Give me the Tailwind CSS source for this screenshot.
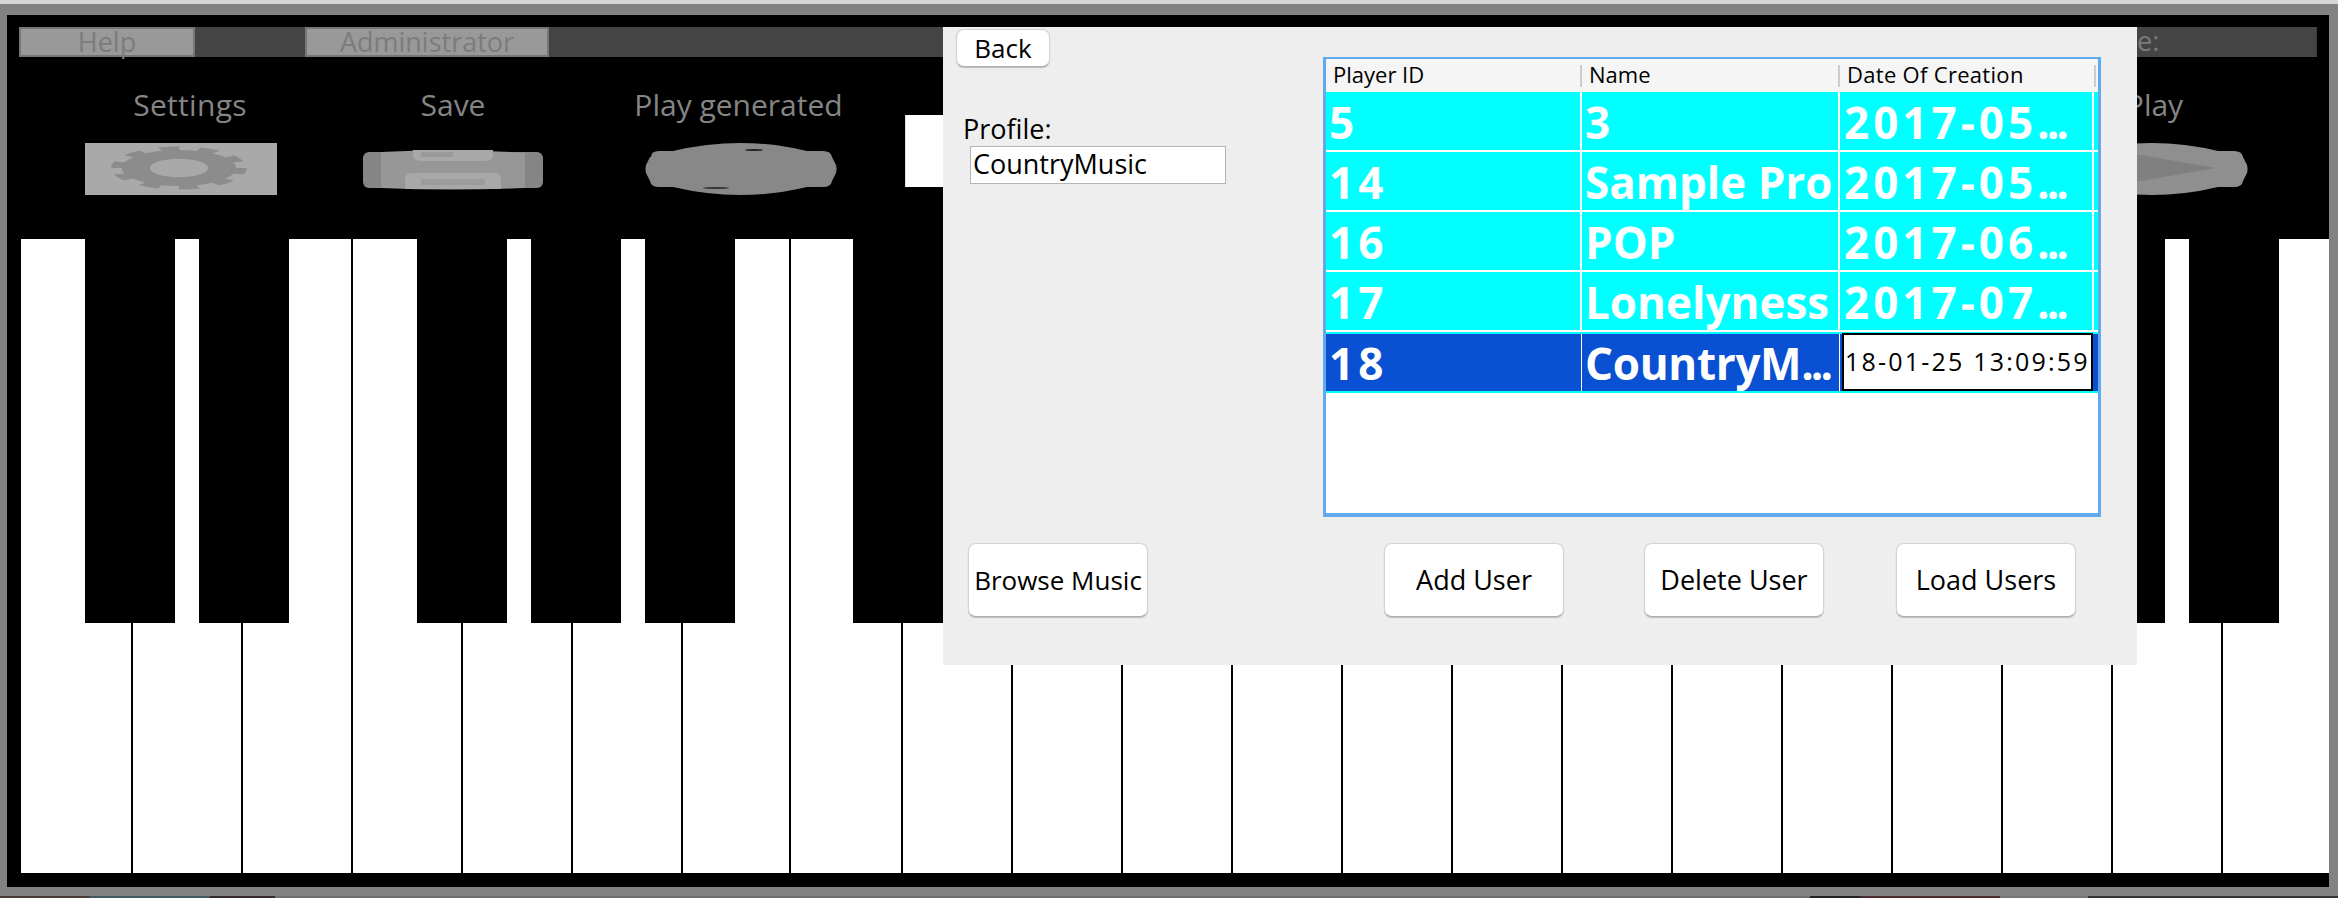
<!DOCTYPE html>
<html lang="en">
<head>
    <meta charset="UTF-8">
    <title>Piano</title>
    <script src="https://cdn.jsdelivr.net/npm/@tailwindcss/browser@4"></script>
</head>
<body class="relative w-[2338px] h-[898px] overflow-hidden bg-[#828282] font-['Open_Sans',sans-serif]">
    <div class="h-[4px] bg-[#d6d6d6]"></div>

    <!-- Main window -->
    <div class="mt-[11px] ml-[7px] w-[2322px] h-[872px] bg-black pt-[12px]">
        <!-- Menu bar -->
        <div class="ml-[12px] w-[2298px] h-[30px] bg-[#444444] flex text-[27px] leading-[25px] text-[#7c7c7c]">
            <div class="w-[176px] border-2 border-[#777777] bg-[#999999] text-center">Help</div>
            <div class="ml-[110px] w-[244px] border-2 border-[#777777] bg-[#999999] text-center">Administrator</div>
            <div class="ml-auto w-[187px] h-[28px] mt-px border-r border-[#3a3a3a] pr-[8px] text-right">
                <span class="block w-[170px] pl-[7px] text-left text-[#7a7a7a]">e:</span>
            </div>
        </div>

        <!-- Toolbar -->
        <div class="h-[182px] flex text-[30px] leading-[40px] text-[#858585]">
            <div class="ml-[78px] w-[192px] mt-[28px] flex flex-col">
                <span class="pl-[18px] text-center tracking-[0.3px]">Settings</span>
                <svg class="mt-[18px] w-[192px] h-[52px] blur-[0.5px]" viewBox="0 0 192 52" preserveAspectRatio="none">
                    <rect width="192" height="52" fill="#a9a9a9"/>
                    <g transform="translate(94 25) scale(.68 .215)">
                        <circle r="84" fill="#8c8c8c"/>
                        <circle r="88" fill="none" stroke="#8c8c8c" stroke-width="24" stroke-dasharray="27.6 27.7"/>
                        <circle r="43" fill="#a9a9a9"/>
                    </g>
                </svg>
            </div>
            <div class="ml-[86px] w-[180px] mt-[28px] flex flex-col items-center">
                <span>Save</span>
                <svg class="mt-[24px] w-[180px] h-[42px] blur-[0.3px]" viewBox="0 0 180 42" preserveAspectRatio="none">
                    <rect y="3" width="180" height="36" rx="6" fill="#858585"/>
                    <path d="M18 3Q90 -1 162 4V39Q90 42 18 39Z" fill="#979797"/>
                    <path d="M50 1H130V7Q130 12 120 12H60Q50 12 50 7Z" fill="#a8a8a8"/>
                    <rect x="58" y="3" width="32" height="5" fill="#9a9a9a"/>
                    <path d="M50 24H130Q138 24 138 30V40H42V30Q42 24 50 24Z" fill="#a8a8a8"/>
                    <rect x="58" y="30" width="64" height="6" fill="#9c9c9c"/>
                </svg>
            </div>
            <div class="ml-[102px] w-[192px] mt-[28px] flex flex-col items-center">
                <span class="whitespace-nowrap pr-[5px]">Play generated</span>
                <svg class="mt-[18px] w-[192px] h-[52px]" viewBox="0 0 192 52" preserveAspectRatio="none">
                    <path d="M6 14Q6 8 14 8H28Q96 -8 162 8H178Q186 8 187 14L191 22Q192 26 191 30L187 38Q186 44 178 44H162Q96 60 28 44H14Q6 44 5 38L1 30Q0 26 1 22L5 14Z" fill="#888888"/>
                    <ellipse cx="109" cy="7" rx="9" ry="1" fill="#222222"/>
                    <ellipse cx="71" cy="45" rx="13" ry="1" fill="#333333"/>
                </svg>
            </div>
            <div class="ml-[68px] mt-[58px] w-[60px] h-[72px] bg-white border-l border-[#dddddd]"></div>
            <div class="ml-[1091px] w-[192px] mt-[28px] flex flex-col">
                <span class="pl-[5px] text-center">Play</span>
                <svg class="mt-[18px] w-[192px] h-[52px]" viewBox="0 0 192 52" preserveAspectRatio="none">
                    <path d="M6 14Q6 8 14 8H28Q96 -8 162 8H178Q186 8 187 14L191 22Q192 26 191 30L187 38Q186 44 178 44H162Q96 60 28 44H14Q6 44 5 38L1 30Q0 26 1 22L5 14Z" fill="#8f8f8f"/>
                    <path d="M50 6L160 25L50 44Z" fill="#808080"/>
                </svg>
            </div>
        </div>

        <!-- Keyboard -->
        <div class="relative ml-[14px] h-[634px] flex bg-white">
            <div class="w-[112px] border-r-2 border-black"></div>
            <div class="w-[110px] border-r-2 border-black"></div>
            <div class="w-[110px] border-r-2 border-black"></div>
            <div class="w-[110px] border-r-2 border-black"></div>
            <div class="w-[110px] border-r-2 border-black"></div>
            <div class="w-[110px] border-r-2 border-black"></div>
            <div class="w-[108px] border-r-2 border-black"></div>
            <div class="w-[112px] border-r-2 border-black"></div>
            <div class="w-[110px] border-r-2 border-black"></div>
            <div class="w-[110px] border-r-2 border-black"></div>
            <div class="w-[110px] border-r-2 border-black"></div>
            <div class="w-[110px] border-r-2 border-black"></div>
            <div class="w-[110px] border-r-2 border-black"></div>
            <div class="w-[110px] border-r-2 border-black"></div>
            <div class="w-[110px] border-r-2 border-black"></div>
            <div class="w-[110px] border-r-2 border-black"></div>
            <div class="w-[110px] border-r-2 border-black"></div>
            <div class="w-[110px] border-r-2 border-black"></div>
            <div class="w-[110px] border-r-2 border-black"></div>
            <div class="w-[110px] border-r-2 border-black"></div>
            <div class="flex-1"></div>

            <!-- Black keys -->
            <div class="absolute top-0 left-[64px] w-[90px] h-[384px] bg-black"></div>
            <div class="absolute top-0 left-[178px] w-[90px] h-[384px] bg-black"></div>
            <div class="absolute top-0 left-[396px] w-[90px] h-[384px] bg-black"></div>
            <div class="absolute top-0 left-[510px] w-[90px] h-[384px] bg-black"></div>
            <div class="absolute top-0 left-[624px] w-[90px] h-[384px] bg-black"></div>
            <div class="absolute top-0 left-[832px] w-[90px] h-[384px] bg-black"></div>
            <div class="absolute top-0 left-[2054px] w-[90px] h-[384px] bg-black"></div>
            <div class="absolute top-0 left-[2168px] w-[90px] h-[384px] bg-black"></div>
        </div>
    </div>

    <!-- Desktop showing under the window -->
    <div class="mt-[9px] h-[2px] flex">
        <div class="w-[90px] bg-[#4a3a38]"></div>
        <div class="w-[120px] bg-[#3f5a60]"></div>
        <div class="w-[65px] bg-[#35292e]"></div>
        <div class="w-[1535px] bg-[#6f6f6f]"></div>
        <div class="w-[50px] bg-[#222222]"></div>
        <div class="w-[140px] bg-[#4a2a2c]"></div>
        <div class="w-[88px] bg-[#777777]"></div>
        <div class="flex-1 bg-[#333333]"></div>
    </div>

    <!-- Dialog -->
    <div class="absolute left-[943px] top-[27px] w-[1194px] h-[638px] bg-[#eeeeee] text-black">
        <div class="flex h-[490px]">
            <div class="w-[380px] pl-[13px] pt-[2px]">
                <button class="block w-[94px] h-[38px] bg-white rounded-lg border border-[#d4d4d4] border-b-[#b0b0b0] shadow-[0_1px_1px_#bbbbbb] text-[26px] leading-[32px]">Back</button>
                <p class="mt-[47px] ml-[7px] text-[27px] leading-[30px]">Profile:</p>
                <div class="mt-[2px] ml-[14px] w-[256px] h-[38px] bg-white border border-[#b5b5b5] pl-[2px] text-[27px] leading-[34px]">CountryMusic</div>
            </div>

            <!-- Player table -->
            <div class="mt-[30px] w-[778px] h-[460px] bg-white border-x-[3px] border-t-2 border-b-4 border-[#5fabee]">
                <div class="h-[33px] bg-[#f5f5f5] grid grid-cols-[256px_258px_256px] text-[22px] leading-[30px]">
                    <div class="pl-[7px] relative">Player ID<span class="absolute right-0 top-[6px] h-[22px] w-[2px] bg-[#cccccc]"></span></div>
                    <div class="pl-[7px] relative">Name<span class="absolute right-0 top-[6px] h-[22px] w-[2px] bg-[#cccccc]"></span></div>
                    <div class="pl-[7px] relative tracking-[0.3px]">Date Of Creation<span class="absolute right-0 top-[6px] h-[22px] w-[2px] bg-[#cccccc]"></span></div>
                </div>
                <div class="text-white text-[44px] font-bold leading-[56px] whitespace-nowrap">
                    <div class="h-[60px] bg-[#00ffff] border-b-2 border-white grid grid-cols-[256px_258px_254px]">
                        <div class="pl-[3px] pt-[2px] border-r-2 border-white tracking-[4px]">5</div>
                        <div class="pl-[3px] pt-[2px] border-r-2 border-white">3</div>
                        <div class="pl-[4px] pt-[2px] border-r-2 border-white tracking-[4px]">2017-05<span class="tracking-[-3px]">...</span></div>
                    </div>
                    <div class="h-[60px] bg-[#00ffff] border-b-2 border-white grid grid-cols-[256px_258px_254px]">
                        <div class="pl-[3px] pt-[2px] border-r-2 border-white tracking-[4px]">14</div>
                        <div class="pl-[3px] pt-[2px] border-r-2 border-white">Sample Pro</div>
                        <div class="pl-[4px] pt-[2px] border-r-2 border-white tracking-[4px]">2017-05<span class="tracking-[-3px]">...</span></div>
                    </div>
                    <div class="h-[60px] bg-[#00ffff] border-b-2 border-white grid grid-cols-[256px_258px_254px]">
                        <div class="pl-[3px] pt-[2px] border-r-2 border-white tracking-[4px]">16</div>
                        <div class="pl-[3px] pt-[2px] border-r-2 border-white">POP</div>
                        <div class="pl-[4px] pt-[2px] border-r-2 border-white tracking-[4px]">2017-06<span class="tracking-[-3px]">...</span></div>
                    </div>
                    <div class="h-[60px] bg-[#00ffff] border-b-2 border-white grid grid-cols-[256px_258px_254px]">
                        <div class="pl-[3px] pt-[2px] border-r-2 border-white tracking-[4px]">17</div>
                        <div class="pl-[3px] pt-[2px] border-r-2 border-white">Lonelyness</div>
                        <div class="pl-[4px] pt-[2px] border-r-2 border-white tracking-[4px]">2017-07<span class="tracking-[-3px]">...</span></div>
                    </div>
                    <div class="h-[61px] bg-[#0a50d2] border-y-2 border-[#00ffff] grid grid-cols-[256px_258px_254px]">
                        <div class="pl-[3px] pt-px border-r border-white tracking-[4px]">18</div>
                        <div class="pl-[3px] pt-px border-r border-white tracking-[-0.3px]">CountryM<span class="tracking-[-3px]">...</span></div>
                        <div class="ml-[2px] mr-px -mt-px pl-[1px] bg-white border-2 border-black text-black text-[25px] font-normal leading-[52px] tracking-[2.2px]">18-01-25 13:09:59</div>
                    </div>
                </div>
            </div>
        </div>

        <!-- Buttons -->
        <div class="mt-[26px] flex text-[27px]">
            <button class="ml-[25px] w-[180px] h-[74px] bg-white rounded-lg border border-[#d4d4d4] border-b-[#b0b0b0] shadow-[0_1px_1px_#bbbbbb] text-[26px]">Browse Music</button>
            <button class="ml-[236px] w-[180px] h-[74px] bg-white rounded-lg border border-[#d4d4d4] border-b-[#b0b0b0] shadow-[0_1px_1px_#bbbbbb]">Add User</button>
            <button class="ml-[80px] w-[180px] h-[74px] bg-white rounded-lg border border-[#d4d4d4] border-b-[#b0b0b0] shadow-[0_1px_1px_#bbbbbb]">Delete User</button>
            <button class="ml-[72px] w-[180px] h-[74px] bg-white rounded-lg border border-[#d4d4d4] border-b-[#b0b0b0] shadow-[0_1px_1px_#bbbbbb]">Load Users</button>
        </div>
    </div>
</body>
</html>
